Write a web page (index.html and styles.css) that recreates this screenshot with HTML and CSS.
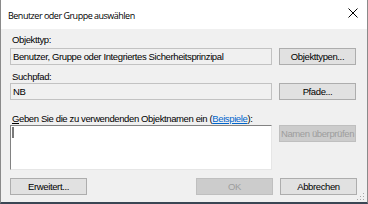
FILE: index.html
```html
<!DOCTYPE html>
<html lang="de">
<head>
<meta charset="utf-8">
<link rel="stylesheet" href="styles.css">
</head>
<body>
<div class="window">
  <div class="titlebar">
    <span class="title">Benutzer oder Gruppe auswählen</span>
    <svg class="close" width="10" height="10" viewBox="0 0 10 10"><path d="M0.5 0.5 L9.5 9.5 M9.5 0.5 L0.5 9.5" stroke="#000" stroke-width="1" fill="none"/></svg>
  </div>
  <div class="content">
    <div class="label l1">Objekttyp:</div>
    <div class="row">
      <div class="field">Benutzer, Gruppe oder Integriertes Sicherheitsprinzipal</div>
      <button class="btn">Objekttypen...</button>
    </div>
    <div class="label l2">Suchpfad:</div>
    <div class="row">
      <div class="field">NB</div>
      <button class="btn">Pfade...</button>
    </div>
    <div class="label l3"><span class="mn">G</span>eben Sie die zu verwendenden Objektnamen ein (<span class="link">Beispiele</span>):</div>
    <div class="row top">
      <div class="textarea"><span class="caret"></span></div>
      <button class="btn disabled">Namen überprüfen</button>
    </div>
    <div class="row bottom">
      <button class="btn">Erweitert...</button>
      <div class="group">
        <button class="btn disabled">OK</button>
        <button class="btn">Abbrechen</button>
      </div>
    </div>
  </div>
  <svg class="grip" width="8" height="8" viewBox="0 0 8 8">
    <rect x="6" y="0" width="1" height="1" fill="#a8a8a8"/>
    <rect x="3" y="3" width="1" height="1" fill="#a8a8a8"/>
    <rect x="6" y="3" width="1" height="1" fill="#a8a8a8"/>
    <rect x="0" y="6" width="1" height="1" fill="#a8a8a8"/>
    <rect x="3" y="6" width="1" height="1" fill="#a8a8a8"/>
    <rect x="6" y="6" width="1" height="1" fill="#a8a8a8"/>
  </svg>
</div>
</body>
</html>
```
FILE: styles.css
```css
html, body {
  margin: 0;
  padding: 0;
  background: #3a4654;
}
.window {
  position: relative;
  box-sizing: border-box;
  width: 368px;
  height: 204px;
  background: #f0f0f0;
  border-left: 1px solid #8a8a8a;
  border-right: 1px solid #8a8a8a;
  border-bottom: 2px solid #3a4654;
  font-family: "Liberation Sans", Arial, sans-serif;
  font-size: 9.5px;
  letter-spacing: -0.38px;
  color: #000;
}
.titlebar {
  height: 29px;
  background: #fff;
  display: flex;
  align-items: center;
  justify-content: space-between;
  padding: 0 9px 0 7px;
}
.title {
  font-family: "Open Sans", "Noto Sans", sans-serif;
  font-size: 9px;
  letter-spacing: -0.5px;
  margin-top: 1px;
}
.close {
  display: block;
  margin-top: -3px;
}
.content {
  padding: 4px 10px 0 9px;
  display: flex;
  flex-direction: column;
}
.label {
  line-height: 13px;
  height: 13px;
  white-space: nowrap;
  padding-left: 2px;
}
.l1 { margin-bottom: 2px; }
.l2 { margin-top: 5px; }
.l3 { margin-top: 12px; }
.mn { text-decoration: underline; }
.link {
  color: #0066cc;
  text-decoration: underline;
}
.row {
  display: flex;
  gap: 7px;
  align-items: flex-start;
}
.field {
  box-sizing: border-box;
  width: 262px;
  height: 17px;
  border: 1px solid #c2c2c2;
  background: #f0f0f0;
  padding: 1px 2px 0;
  line-height: 13px;
  white-space: nowrap;
}
.btn {
  box-sizing: border-box;
  width: 77px;
  height: 17px;
  margin: 0;
  padding: 0;
  border: 1px solid #adadad;
  background: #e1e1e1;
  font: inherit;
  letter-spacing: inherit;
  color: #000;
  line-height: 14px;
  text-align: center;
  white-space: nowrap;
}
.btn.disabled {
  background: #cccccc;
  border-color: #bfbfbf;
  color: #9d9d9d;
}
.textarea {
  box-sizing: border-box;
  width: 262px;
  height: 45px;
  background: #fff;
  border-top: 1px solid #828282;
  border-left: 1px solid #828282;
  border-right: 1px solid #e6e6e6;
  border-bottom: 1px solid #e6e6e6;
  padding: 1px 0 0 1px;
}
.caret {
  display: block;
  width: 2px;
  height: 11px;
  background: #7a7a7a;
}
.bottom {
  margin-top: 8px;
  justify-content: space-between;
}
.group {
  display: flex;
  gap: 7px;
}
.grip {
  position: absolute;
  right: 2px;
  bottom: 1px;
}
```
